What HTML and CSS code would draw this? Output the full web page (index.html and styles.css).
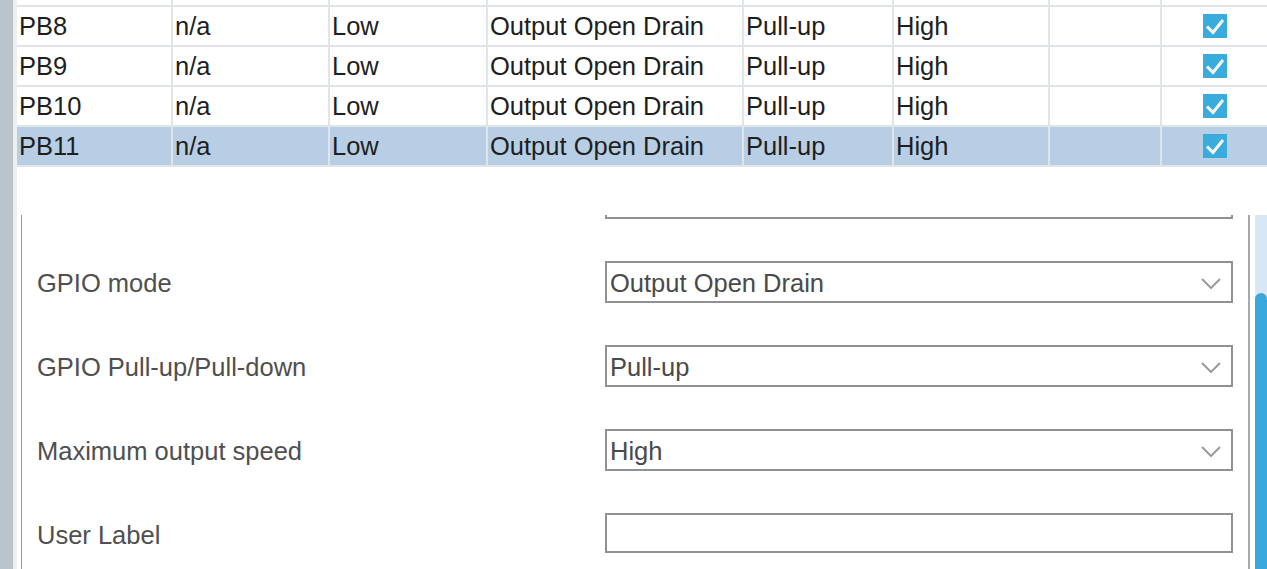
FILE: index.html
```html
<!DOCTYPE html>
<html>
<head>
<meta charset="utf-8">
<link rel="stylesheet" href="styles.css">
</head>
<body>
<div class="sidebar"></div>
<div class="gutter"></div>
<div class="main">
  <div class="table">
    <div class="row stub">
      <div class="cell"></div><div class="cell"></div><div class="cell"></div><div class="cell"></div><div class="cell"></div><div class="cell"></div><div class="cell"></div><div class="cell"></div>
    </div>
    <div class="row">
      <div class="cell">PB8</div><div class="cell">n/a</div><div class="cell">Low</div><div class="cell">Output Open Drain</div><div class="cell">Pull-up</div><div class="cell">High</div><div class="cell"></div>
      <div class="cell center"><span class="check"><svg viewBox="0 0 24 24" width="24" height="24"><path d="M4 12.5 L10 18.5 L20 6" fill="none" stroke="#fff" stroke-width="3"/></svg></span></div>
    </div>
    <div class="row">
      <div class="cell">PB9</div><div class="cell">n/a</div><div class="cell">Low</div><div class="cell">Output Open Drain</div><div class="cell">Pull-up</div><div class="cell">High</div><div class="cell"></div>
      <div class="cell center"><span class="check"><svg viewBox="0 0 24 24" width="24" height="24"><path d="M4 12.5 L10 18.5 L20 6" fill="none" stroke="#fff" stroke-width="3"/></svg></span></div>
    </div>
    <div class="row">
      <div class="cell">PB10</div><div class="cell">n/a</div><div class="cell">Low</div><div class="cell">Output Open Drain</div><div class="cell">Pull-up</div><div class="cell">High</div><div class="cell"></div>
      <div class="cell center"><span class="check"><svg viewBox="0 0 24 24" width="24" height="24"><path d="M4 12.5 L10 18.5 L20 6" fill="none" stroke="#fff" stroke-width="3"/></svg></span></div>
    </div>
    <div class="row selected">
      <div class="cell">PB11</div><div class="cell">n/a</div><div class="cell">Low</div><div class="cell">Output Open Drain</div><div class="cell">Pull-up</div><div class="cell">High</div><div class="cell"></div>
      <div class="cell center"><span class="check"><svg viewBox="0 0 24 24" width="24" height="24"><path d="M4 12.5 L10 18.5 L20 6" fill="none" stroke="#fff" stroke-width="3"/></svg></span></div>
    </div>
  </div>
  <div class="spacer"></div>
  <div class="panel-area">
    <div class="panel">
      <div class="panel-content">
        <div class="form-row">
          <div class="label"></div>
          <div class="input tall"></div>
        </div>
        <div class="form-row">
          <div class="label">GPIO mode</div>
          <div class="select"><span>Output Open Drain</span><svg class="chev" viewBox="0 0 20 11" width="20" height="11"><polyline points="1,1 10,10 19,1" fill="none" stroke="#9a9a9a" stroke-width="2"/></svg></div>
        </div>
        <div class="form-row">
          <div class="label">GPIO Pull-up/Pull-down</div>
          <div class="select"><span>Pull-up</span><svg class="chev" viewBox="0 0 20 11" width="20" height="11"><polyline points="1,1 10,10 19,1" fill="none" stroke="#9a9a9a" stroke-width="2"/></svg></div>
        </div>
        <div class="form-row">
          <div class="label">Maximum output speed</div>
          <div class="select"><span>High</span><svg class="chev" viewBox="0 0 20 11" width="20" height="11"><polyline points="1,1 10,10 19,1" fill="none" stroke="#9a9a9a" stroke-width="2"/></svg></div>
        </div>
        <div class="form-row">
          <div class="label">User Label</div>
          <div class="input"></div>
        </div>
      </div>
    </div>
    <div class="scrollbar"><div class="thumb"></div></div>
  </div>
</div>
</body>
</html>
```
FILE: styles.css
```css
html, body {
  margin: 0;
  padding: 0;
  height: 100%;
}
body {
  display: flex;
  overflow: hidden;
  background: #fff;
  font-family: "Liberation Sans", Arial, sans-serif;
  font-size: 25.5px;
}
.sidebar {
  width: 13px;
  flex: none;
  background: #b9c4cb;
}
.gutter {
  width: 4px;
  flex: none;
  background: #eceef0;
}
.main {
  flex: 1;
  display: flex;
  flex-direction: column;
  min-width: 0;
}
.table {
  display: grid;
  row-gap: 2px;
  background: #e1e4e8;
  padding-bottom: 2px;
}
.row {
  display: grid;
  grid-template-columns: 154px 155px 156px 254px 148px 154px 110px 1fr;
  column-gap: 2px;
  height: 38px;
}
.row.stub {
  height: 5px;
}
.cell {
  background: #fff;
  color: #1e1e1e;
  padding-left: 2px;
  display: flex;
  align-items: center;
  white-space: nowrap;
  overflow: hidden;
}
.row.selected .cell {
  background: #b8cee4;
}
.cell.center {
  justify-content: center;
  padding-left: 1px;
}
.check {
  width: 24px;
  height: 24px;
  background: #3aabdd;
  display: block;
}
.check svg {
  display: block;
}
.spacer {
  height: 48px;
  flex: none;
}
.panel-area {
  flex: 1;
  display: flex;
  min-height: 0;
}
.panel {
  margin-left: 4px;
  width: 1226px;
  border-left: 1px solid #999;
  border-right: 2px solid #a8a8a8;
  overflow: hidden;
}
.panel-content {
  margin-top: -59px;
}
.form-row {
  display: grid;
  grid-template-columns: 583px 628px;
  height: 84px;
}
.label {
  padding-left: 15px;
  color: #4f4f4f;
  align-self: center;
  margin-top: 3px;
}
.input, .select {
  margin-top: 21px;
  box-sizing: border-box;
  border: 2px solid #8e9295;
}
.input {
  height: 40px;
}
.input.tall {
  height: 42px;
}
.select {
  height: 42px;
  display: flex;
  align-items: center;
  justify-content: space-between;
  padding-left: 3px;
  padding-top: 3px;
  color: #4a4a4a;
}
.chev {
  margin-right: 10px;
}
.scrollbar {
  margin-left: 5px;
  width: 12px;
  background: #d7e7f5;
  display: flex;
  flex-direction: column;
}
.thumb {
  margin-top: 78px;
  flex: 1;
  background: #3aa8dc;
  border-radius: 6px 6px 0 0;
}
```
